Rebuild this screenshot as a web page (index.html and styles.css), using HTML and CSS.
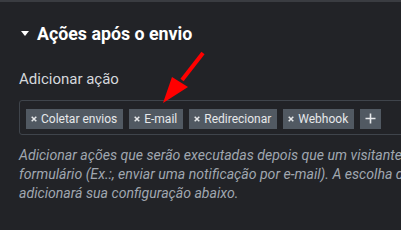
FILE: index.html
```html
<!DOCTYPE html>
<html>
<head>
<meta charset="utf-8">
<link rel="stylesheet" href="styles.css">
</head>
<body>
<div class="topline"></div>
<div class="section">
  <div class="title">
    <span class="caret"></span>
    <span class="title-text">Ações após o envio</span>
  </div>
  <div class="label">Adicionar ação</div>
  <div class="select">
    <span class="tag"><svg class="x" width="6" height="6" viewBox="0 0 6 6"><path d="M0.7 0.7L5.3 5.3M5.3 0.7L0.7 5.3"/></svg>Coletar envios</span>
    <span class="tag"><svg class="x" width="6" height="6" viewBox="0 0 6 6"><path d="M0.7 0.7L5.3 5.3M5.3 0.7L0.7 5.3"/></svg>E-mail</span>
    <span class="tag"><svg class="x" width="6" height="6" viewBox="0 0 6 6"><path d="M0.7 0.7L5.3 5.3M5.3 0.7L0.7 5.3"/></svg>Redirecionar</span>
    <span class="tag"><svg class="x" width="6" height="6" viewBox="0 0 6 6"><path d="M0.7 0.7L5.3 5.3M5.3 0.7L0.7 5.3"/></svg>Webhook</span>
    <span class="tag plus"><svg width="11" height="11" viewBox="0 0 11 11"><path d="M5.5 0.5V10.5M0.5 5.5H10.5"/></svg></span>
  </div>
  <div class="help">Adicionar ações que serão executadas depois que um visitante enviar o<br>formulário (Ex.:, enviar uma notificação por e-mail). A escolha de uma ação<br>adicionará sua configuração abaixo.</div>
</div>
<svg class="arrow" width="60" height="70" viewBox="0 0 60 70">
  <line x1="43" y1="3" x2="22" y2="30" stroke="#ff0000" stroke-width="4"/>
  <polygon points="3,53 12,27 28,37" fill="#ff0000"/>
</svg>
</body>
</html>
```
FILE: styles.css
```css
html, body {
  margin: 0;
  padding: 0;
}
body {
  width: 401px;
  height: 230px;
  overflow: hidden;
  background: #222327;
  font-family: Roboto, "Liberation Sans", sans-serif;
  position: relative;
}
.topline {
  height: 2px;
  background: #3a3c41;
}
.section {
  padding-left: 19px;
}
.title {
  display: flex;
  align-items: center;
  gap: 8px;
  margin-top: 20px;
  height: 22px;
}
.caret {
  width: 0;
  height: 0;
  margin-left: 2px;
  border-left: 4.5px solid transparent;
  border-right: 4.5px solid transparent;
  border-top: 5px solid #ffffff;
}
.title-text {
  font-size: 17.8px;
  font-weight: bold;
  color: #ffffff;
}
.label {
  margin-top: 26px;
  font-size: 15px;
  color: #d5d8dc;
  line-height: 18px;
}
.select {
  margin-top: 12px;
  width: 420px;
  height: 35px;
  box-sizing: border-box;
  border: 1px solid #3f444b;
  border-radius: 3px;
  display: flex;
  align-items: center;
  gap: 6px;
  padding-left: 6px;
  padding-top: 2px;
}
.tag {
  height: 20px;
  line-height: 20px;
  background: #515962;
  color: #e6e8ea;
  font-size: 12px;
  padding: 0 6px 0 5px;
  white-space: nowrap;
  display: flex;
  align-items: center;
}
.tag svg path {
  stroke: #e6e8ea;
  fill: none;
}
.tag .x {
  margin-right: 4px;
}
.tag .x path {
  stroke-width: 1.5;
}
.tag.plus {
  width: 21px;
  box-sizing: border-box;
  padding: 0;
  justify-content: center;
}
.tag.plus path {
  stroke-width: 1.6;
}
.help {
  margin-top: 11px;
  font-size: 14.1px;
  font-style: italic;
  color: #a0a7b0;
  line-height: 19px;
  white-space: nowrap;
}
.arrow {
  position: absolute;
  left: 160px;
  top: 50px;
}
```
